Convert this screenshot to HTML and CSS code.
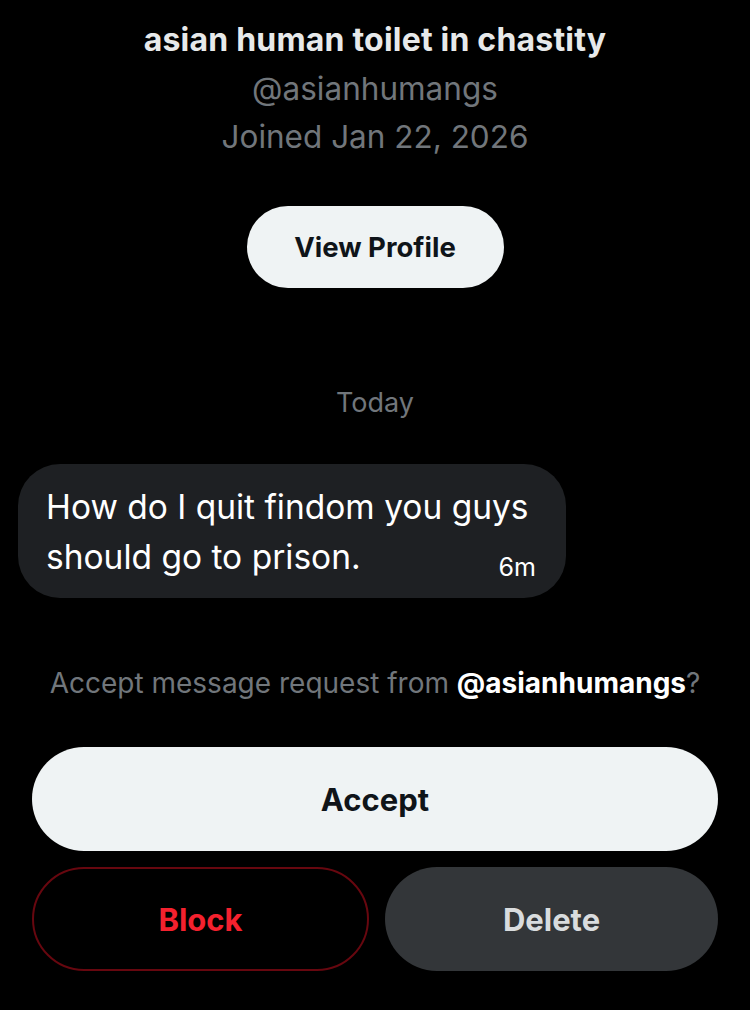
FILE: index.html
```html
<!DOCTYPE html>
<html lang="en">

<head>
  <meta charset="UTF-8">
  <title>Message request</title>
  <link rel="stylesheet" href="styles.css">
</head>

<body>
  <div class="page">
    <div class="profile">
      <div class="name">asian human toilet in chastity</div>
      <div class="handle">@asianhumangs</div>
      <div class="joined">Joined Jan 22, 2026</div>
      <button class="btn-profile">View Profile</button>
    </div>

    <div class="day">Today</div>

    <div class="bubble">
      <div class="line">How do I quit findom you guys</div>
      <div class="line last">
        <span>should go to prison.</span>
        <span class="time">6m</span>
      </div>
    </div>

    <div class="request">
      Accept message request from <b>@asianhumangs</b>?
    </div>

    <div class="actions">
      <button class="btn btn-accept">Accept</button>
      <div class="row">
        <button class="btn btn-block">Block</button>
        <button class="btn btn-delete">Delete</button>
      </div>
    </div>
  </div>
</body>

</html>
```

FILE: styles.css
```css
* {
  margin: 0;
  padding: 0;
  box-sizing: border-box;
}

body {
  background-color: #000;
  font-family: Inter, Roboto, "Liberation Sans", sans-serif;
  color: #e7e9ea;
}

.page {
  width: 750px;
  height: 1010px;
  padding: 0 32px;
}

.profile {
  display: flex;
  flex-direction: column;
  align-items: center;
  padding-top: 19px;
}

.profile .name {
  font-size: 32px;
  font-weight: 700;
  line-height: 42px;
  letter-spacing: 0.2px;
}

.profile .handle,
.profile .joined {
  font-size: 31.5px;
  line-height: 48px;
  color: #71767b;
}

.profile .handle {
  margin-top: 4px;
}

.btn-profile {
  margin-top: 45px;
  width: 257px;
  height: 82px;
  border: none;
  border-radius: 41px;
  background-color: #eff3f4;
  color: #0f1419;
  font-family: inherit;
  font-size: 27.5px;
  font-weight: 700;
}

.day {
  margin-top: 99px;
  text-align: center;
  font-size: 27px;
  line-height: 32px;
  color: #71767b;
}

.bubble {
  margin: 45px 0 0 -14px;
  width: 548px;
  height: 134px;
  padding: 18px 30px 0 28px;
  border-radius: 42px;
  background-color: #1e2023;
  color: #fff;
}

.bubble .line {
  font-size: 33.5px;
  line-height: 50px;
  white-space: nowrap;
}

.bubble .last {
  display: flex;
  justify-content: space-between;
  align-items: flex-end;
}

.bubble .time {
  font-size: 25px;
  line-height: 30px;
}

.request {
  margin-top: 69px;
  text-align: center;
  font-size: 28px;
  line-height: 32px;
  color: #71767b;
}

.request b {
  color: #fff;
}

.actions {
  margin-top: 48px;
  display: flex;
  flex-direction: column;
  gap: 16px;
}

.row {
  display: flex;
  gap: 16px;
}

.btn {
  height: 104px;
  border-radius: 52px;
  border: none;
  font-family: inherit;
  font-size: 31px;
  font-weight: 700;
}

.btn-accept {
  width: 100%;
  background-color: #eff3f4;
  color: #0f1419;
}

.row .btn {
  flex: 1;
}

.btn-block {
  background-color: #000;
  border: 2px solid #67070f;
  color: #f4212e;
}

.btn-delete {
  background-color: #333639;
  color: #d9dcde;
}
```
